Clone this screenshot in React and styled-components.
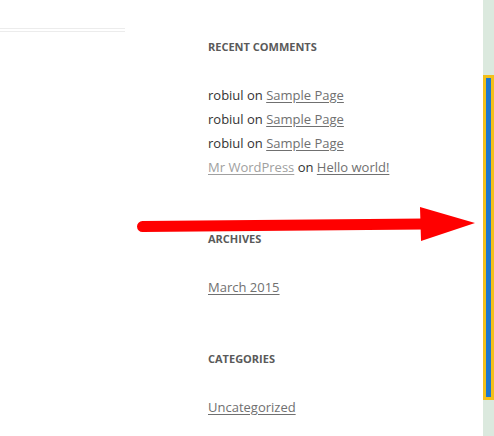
import React from 'react'
import styled, { createGlobalStyle } from 'styled-components'

const GlobalStyle = createGlobalStyle`
    html, body {
        margin: 0;
        padding: 0;
        background: #fff;
    }
    body {
        font-family: 'Open Sans', 'Noto Sans', sans-serif;
    }
`

const Page = styled.div`
    position: relative;
    display: flex;
    width: 494px;
    height: 436px;
    overflow: hidden;
    background: #fff;
`

const ContentColumn = styled.div`
    width: 125px;
    flex-shrink: 0;
    padding-top: 28px;
`

const Rule = styled.div`
    height: 1px;
    background: #ececec;
    margin-bottom: 2px;
`

const Sidebar = styled.aside`
    flex: 1;
    padding: 39px 0 0 83px;
`

const Widget = styled.section`
    margin-bottom: 52px;
`

const WidgetTitle = styled.h2`
    margin: 0 0 28px;
    font-size: 11px;
    line-height: 16px;
    font-weight: 700;
    letter-spacing: 0;
    color: #5a5a5a;
    text-transform: uppercase;
`

const List = styled.ul`
    list-style: none;
    margin: 0;
    padding: 0;
`

const Item = styled.li`
    font-size: 13px;
    line-height: 24px;
    color: #333;
`

const Link = styled.a`
    color: ${(props) => (props.muted ? '#a0a0a0' : '#707070')};
    text-decoration: underline;
    text-underline-offset: 2px;
`

const ScrollTrack = styled.div`
    width: 11px;
    flex-shrink: 0;
    background: #dbe9de;
    padding-top: 75px;
`

const ScrollThumb = styled.div`
    height: 319px;
    border: 3px solid #f2c01a;
    background: #1c78d0;
`

const ArrowSvg = styled.svg`
    position: absolute;
    left: 0;
    top: 0;
    pointer-events: none;
`

const comments = [
    { author: 'robiul', post: 'Sample Page' },
    { author: 'robiul', post: 'Sample Page' },
    { author: 'robiul', post: 'Sample Page' },
    { author: 'Mr WordPress', post: 'Hello world!', linked: true },
]

function App() {
    return (
        <Page>
            <GlobalStyle />
            <ContentColumn>
                <Rule />
                <Rule />
            </ContentColumn>
            <Sidebar>
                <Widget>
                    <WidgetTitle>Recent Comments</WidgetTitle>
                    <List>
                        {comments.map((c, i) => (
                            <Item key={i}>
                                {c.linked ? <Link muted>{c.author}</Link> : c.author}
                                {' on '}
                                <Link>{c.post}</Link>
                            </Item>
                        ))}
                    </List>
                </Widget>
                <Widget>
                    <WidgetTitle>Archives</WidgetTitle>
                    <List>
                        <Item>
                            <Link>March 2015</Link>
                        </Item>
                    </List>
                </Widget>
                <Widget>
                    <WidgetTitle>Categories</WidgetTitle>
                    <List>
                        <Item>
                            <Link>Uncategorized</Link>
                        </Item>
                    </List>
                </Widget>
            </Sidebar>
            <ScrollTrack>
                <ScrollThumb />
            </ScrollTrack>
            <ArrowSvg width="494" height="436" viewBox="0 0 494 436">
                <line
                    x1="142.5"
                    y1="226.5"
                    x2="424"
                    y2="224"
                    stroke="#ff0000"
                    strokeWidth="11"
                    strokeLinecap="round"
                />
                <polygon points="420,207 475,223 421,241" fill="#ff0000" />
            </ArrowSvg>
        </Page>
    )
}

export default App
